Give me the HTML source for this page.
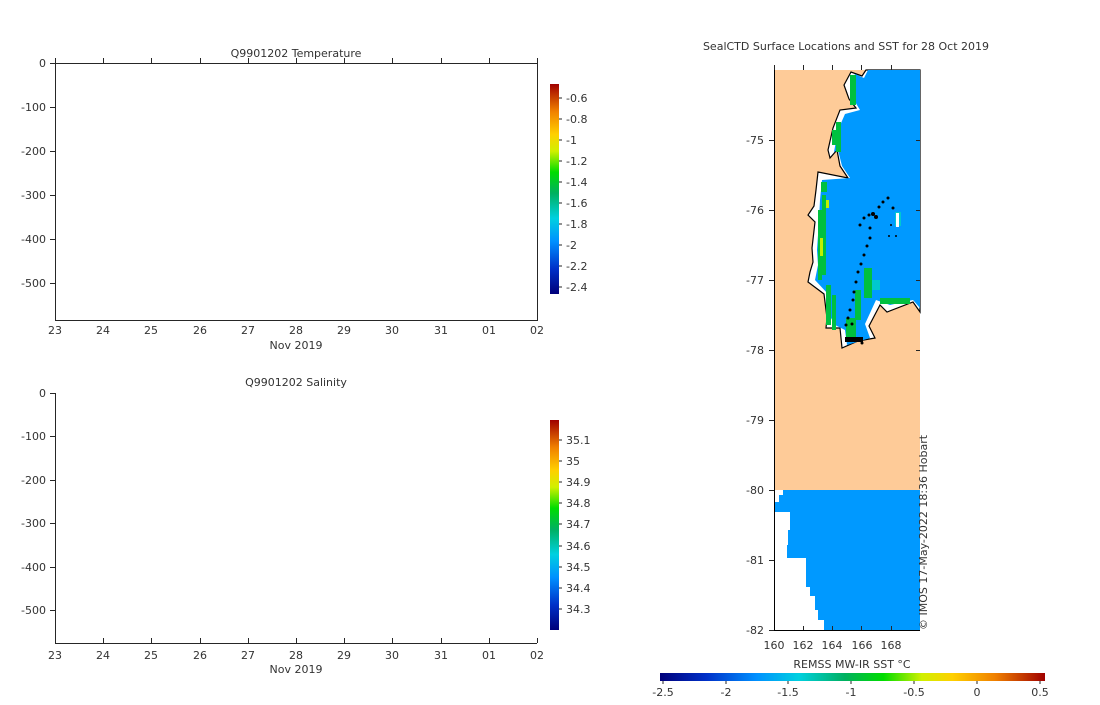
<!DOCTYPE html>
<html><head><meta charset="utf-8"><style>
html,body{margin:0;padding:0;background:#fff;}
svg text{font-family:"DejaVu Sans","Liberation Sans",sans-serif;font-size:11px;fill:#333;}
</style></head><body>
<svg width="1100" height="700" viewBox="0 0 1100 700" xmlns="http://www.w3.org/2000/svg">
<defs>
<linearGradient id="cv" x1="0" y1="1" x2="0" y2="0">
<stop offset="0" stop-color="#00007a"/><stop offset="0.12" stop-color="#0030c8"/><stop offset="0.25" stop-color="#0090ff"/><stop offset="0.36" stop-color="#00d0e0"/><stop offset="0.48" stop-color="#00b060"/><stop offset="0.58" stop-color="#00dd00"/><stop offset="0.68" stop-color="#d0f000"/><stop offset="0.76" stop-color="#ffd000"/><stop offset="0.87" stop-color="#f08000"/><stop offset="1" stop-color="#a00000"/>
</linearGradient>
<linearGradient id="ch" x1="0" y1="0" x2="1" y2="0">
<stop offset="0" stop-color="#00007a"/><stop offset="0.12" stop-color="#0030c8"/><stop offset="0.25" stop-color="#0090ff"/><stop offset="0.36" stop-color="#00d0e0"/><stop offset="0.48" stop-color="#00b060"/><stop offset="0.58" stop-color="#00dd00"/><stop offset="0.68" stop-color="#d0f000"/><stop offset="0.76" stop-color="#ffd000"/><stop offset="0.87" stop-color="#f08000"/><stop offset="1" stop-color="#a00000"/>
</linearGradient>
</defs>

<!-- Temperature plot -->
<text x="296" y="57" text-anchor="middle">Q9901202  Temperature</text>
<rect x="55.5" y="63.5" width="482" height="257" fill="none" stroke="#262626"/>
<g stroke="#262626">
<path d="M50 63.5h5M50 107.5h5M50 151.5h5M50 195.5h5M50 239.5h5M50 283.5h5"/>
<path d="M55.5 63v-5M103.5 63v-5M151.5 63v-5M200.5 63v-5M248.5 63v-5M296.5 63v-5M344.5 63v-5M392.5 63v-5M441.5 63v-5M489.5 63v-5M537.5 63v-5"/>
</g>
<g text-anchor="end">
<text x="46" y="67">0</text><text x="46" y="111">-100</text><text x="46" y="155">-200</text><text x="46" y="199">-300</text><text x="46" y="243">-400</text><text x="46" y="287">-500</text>
</g>
<g text-anchor="middle">
<text x="55" y="334">23</text><text x="103" y="334">24</text><text x="151" y="334">25</text><text x="200" y="334">26</text><text x="248" y="334">27</text><text x="296" y="334">28</text><text x="344" y="334">29</text><text x="392" y="334">30</text><text x="441" y="334">31</text><text x="489" y="334">01</text><text x="537" y="334">02</text>
<text x="296" y="349">Nov 2019</text>
</g>
<rect x="550" y="84" width="9" height="210" fill="url(#cv)"/>
<g stroke="#262626"><path d="M559 98h3M559 119h3M559 140h3M559 161h3M559 182h3M559 203h3M559 224h3M559 245h3M559 266h3M559 287h3"/></g>
<g>
<text x="566" y="102">-0.6</text><text x="566" y="123">-0.8</text><text x="566" y="144">-1</text><text x="566" y="165">-1.2</text><text x="566" y="186">-1.4</text><text x="566" y="207">-1.6</text><text x="566" y="228">-1.8</text><text x="566" y="249">-2</text><text x="566" y="270">-2.2</text><text x="566" y="291">-2.4</text>
</g>

<!-- Salinity plot -->
<text x="296" y="386" text-anchor="middle">Q9901202  Salinity</text>
<path d="M55.5 393v250.5H537" fill="none" stroke="#262626"/>
<g stroke="#262626">
<path d="M50 393.5h5M50 436.5h5M50 480.5h5M50 523.5h5M50 567.5h5M50 610.5h5"/>
<path d="M103.5 643v-5M151.5 643v-5M200.5 643v-5M248.5 643v-5M296.5 643v-5M344.5 643v-5M392.5 643v-5M441.5 643v-5M489.5 643v-5M537.5 643v-5"/>
</g>
<g text-anchor="end">
<text x="46" y="397">0</text><text x="46" y="440">-100</text><text x="46" y="484">-200</text><text x="46" y="527">-300</text><text x="46" y="571">-400</text><text x="46" y="614">-500</text>
</g>
<g text-anchor="middle">
<text x="55" y="659">23</text><text x="103" y="659">24</text><text x="151" y="659">25</text><text x="200" y="659">26</text><text x="248" y="659">27</text><text x="296" y="659">28</text><text x="344" y="659">29</text><text x="392" y="659">30</text><text x="441" y="659">31</text><text x="489" y="659">01</text><text x="537" y="659">02</text>
<text x="296" y="673">Nov 2019</text>
</g>
<rect x="550" y="420" width="9" height="210" fill="url(#cv)"/>
<g stroke="#262626"><path d="M559 440h3M559 461h3M559 482h3M559 503h3M559 524h3M559 546h3M559 567h3M559 588h3M559 609h3"/></g>
<g>
<text x="566" y="444">35.1</text><text x="566" y="465">35</text><text x="566" y="486">34.9</text><text x="566" y="507">34.8</text><text x="566" y="528">34.7</text><text x="566" y="550">34.6</text><text x="566" y="571">34.5</text><text x="566" y="592">34.4</text><text x="566" y="613">34.3</text>
</g>

<!-- Map -->
<text x="846" y="50" text-anchor="middle">SealCTD Surface Locations and SST for 28 Oct 2019</text>
<rect x="774" y="70" width="146" height="420" fill="#fecb98"/>
<polygon fill="#fff" stroke="#000" stroke-width="1.2" points="866,70 862,76 851,72 844,85 849,99 856,108 840,110 833,128 828,150 830,158 837,150 840,166 848,178 818,172 816,190 814,206 808,215 815,222 812,248 813,262 810,272 808,282 824,294 827,318 826,328 840,328 842,348 858,341 875,338 869,326 880,305 887,312 913,302 920,312 920,70"/>
<polygon fill="#0099ff" points="868,70 864,78 855,74 850,86 854,100 860,110 845,114 838,130 834,152 838,150 842,166 850,178 822,180 820,200 819,220 817,250 818,265 815,280 828,294 831,318 835,325 845,330 847,345 870,338 865,324 876,300 890,305 913,300 920,308 920,70"/>
<g fill="#00c040">
<rect x="850" y="75" width="6" height="30"/><rect x="836" y="122" width="5" height="30"/><rect x="832" y="130" width="4" height="15"/>
<rect x="821" y="182" width="6" height="10"/><rect x="822" y="195" width="4" height="80"/><rect x="818" y="210" width="4" height="70"/>
<rect x="826" y="285" width="5" height="40"/><rect x="832" y="295" width="4" height="35"/><rect x="846" y="318" width="10" height="20"/>
<rect x="864" y="268" width="8" height="30"/><rect x="855" y="290" width="6" height="30"/><rect x="880" y="298" width="30" height="6"/>
</g>
<g fill="#c0f000"><rect x="820" y="238" width="3" height="18"/><rect x="826" y="200" width="3" height="8"/></g>
<g fill="#00c8d0"><rect x="895" y="212" width="6" height="14"/><rect x="872" y="280" width="8" height="10"/></g>
<rect x="896" y="213" width="3" height="14" fill="#fff"/>
<g fill="#000">
<circle cx="883" cy="202" r="1.5"/><circle cx="888" cy="198" r="1.5"/><circle cx="879" cy="207" r="1.5"/><circle cx="876" cy="217" r="2"/><circle cx="873" cy="214" r="2"/><circle cx="869" cy="215" r="1.5"/><circle cx="864" cy="218" r="1.5"/><circle cx="860" cy="225" r="1.5"/><circle cx="870" cy="228" r="1.5"/><circle cx="870" cy="238" r="1.5"/><circle cx="867" cy="246" r="1.5"/><circle cx="864" cy="255" r="1.5"/><circle cx="861" cy="264" r="1.5"/><circle cx="858" cy="272" r="1.5"/><circle cx="856" cy="282" r="1.5"/><circle cx="854" cy="292" r="1.5"/><circle cx="853" cy="300" r="1.5"/><circle cx="850" cy="310" r="1.5"/><circle cx="848" cy="318" r="1.5"/><circle cx="846" cy="325" r="1.5"/><circle cx="852" cy="324" r="1.5"/><circle cx="891" cy="225" r="1"/><circle cx="896" cy="236" r="1"/><circle cx="889" cy="236" r="1"/><circle cx="893" cy="208" r="1.5"/>
<rect x="845" y="337" width="18" height="5"/><circle cx="862" cy="343" r="1.5"/>
</g>
<polygon fill="#0099ff" points="783,490 920,490 920,630 824,630 824,620 818,620 818,610 815,610 815,596 810,596 810,587 806,587 806,558 787,558 787,545 788,545 788,530 790,530 790,512 774,512 774,502 779,502 779,495 783,495"/>
<path d="M774.5 69v561.5H920" fill="none" stroke="#000"/>
<g stroke="#262626">
<path d="M769 140.5h5M769 210.5h5M769 280.5h5M769 350.5h5M769 420.5h5M769 490.5h5M769 560.5h5M769 630.5h5"/>
<path d="M920 140.5h-4M920 210.5h-4M920 280.5h-4M920 350.5h-4"/>
<path d="M803.5 630v-4M832.5 630v-4M861.5 630v-4M891.5 630v-4M774.5 70v-5M803.5 70v-5M832.5 70v-5M861.5 70v-5M891.5 70v-5"/>
</g>
<g text-anchor="end">
<text x="764" y="144">-75</text><text x="764" y="214">-76</text><text x="764" y="284">-77</text><text x="764" y="354">-78</text><text x="764" y="424">-79</text><text x="764" y="494">-80</text><text x="764" y="564">-81</text><text x="764" y="634">-82</text>
</g>
<g text-anchor="middle">
<text x="774" y="649">160</text><text x="803" y="649">162</text><text x="832" y="649">164</text><text x="862" y="649">166</text><text x="891" y="649">168</text>
<text x="852" y="668">REMSS MW-IR SST °C</text>
</g>
<text transform="translate(927,630) rotate(-90)" font-size="10">© IMOS 17-May-2022 18:36 Hobart</text>
<rect x="660" y="673" width="385" height="8" fill="url(#ch)"/>
<g stroke="#262626"><path d="M663 681v3M726 681v3M788 681v3M851 681v3M914 681v3M977 681v3M1040 681v3"/></g>
<g text-anchor="middle">
<text x="663" y="696">-2.5</text><text x="726" y="696">-2</text><text x="788" y="696">-1.5</text><text x="851" y="696">-1</text><text x="914" y="696">-0.5</text><text x="977" y="696">0</text><text x="1040" y="696">0.5</text>
</g>
</svg>
</body></html>
